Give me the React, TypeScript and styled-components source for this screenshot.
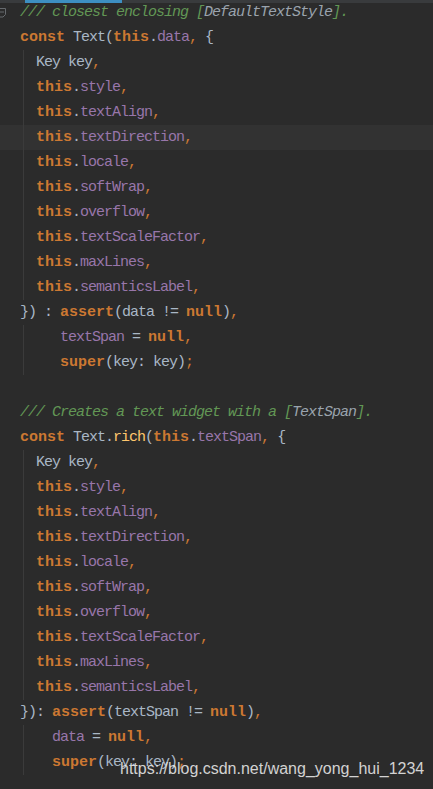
import React from 'react';
import styled, { createGlobalStyle } from 'styled-components';

const Global = createGlobalStyle`
  html, body { margin: 0; padding: 0; background: #2b2b2b; }
  body { overflow: hidden; }
`;

const Editor = styled.div`
  position: relative;
  width: 433px;
  height: 789px;
  overflow: hidden;
  background: #2b2b2b;
  font-family: "Liberation Mono", "DejaVu Sans Mono", monospace;
  font-size: 15px;
  letter-spacing: -1px;
  color: #a9b7c6;
`;

const TabStrip = styled.div`
  position: absolute;
  top: 0;
  left: 0;
  right: 0;
  height: 3px;
  display: flex;
  background: #393b3d;
`;

const ActiveTab = styled.div`
  margin-left: 25px;
  width: 97px;
  height: 3px;
  background: #3d8fc2;
`;

const Line = styled.div<{ $current?: boolean; $guide?: boolean }>`
  display: flex;
  height: 25px;
  line-height: 25px;
  white-space: pre;
  background-color: ${(p) => (p.$current ? '#323232' : 'transparent')};
  background-image: ${(p) => (p.$guide ? 'linear-gradient(#3b3b3b, #3b3b3b)' : 'none')};
  background-size: 1px 100%;
  background-position: 23px 0;
  background-repeat: no-repeat;
`;

const Gutter = styled.div`
  width: 20px;
  flex: none;
  display: flex;
  align-items: center;
`;

const Text = styled.span``;

const Kw = styled.span`
  color: #cc7832;
  font-weight: bold;
  letter-spacing: 0;
`;

const Field = styled.span`
  color: #9876aa;
`;

const Punc = styled.span`
  color: #cc7832;
`;

const Fn = styled.span`
  color: #ffc66d;
`;

const Doc = styled.span`
  color: #629755;
  font-style: italic;
`;

const DocRef = styled.span`
  color: #9aa3ad;
  font-style: italic;
`;

const Watermark = styled.div`
  position: absolute;
  left: 120px;
  top: 761px;
  font-family: "Liberation Sans", Arial, sans-serif;
  font-size: 16px;
  line-height: 16px;
  letter-spacing: 0;
  color: rgba(236, 236, 236, 0.88);
  white-space: nowrap;
`;

type Tok = [string, string];

const render = (toks: Tok[]) =>
  toks.map(([t, s], i) => {
    switch (t) {
      case 'k':
        return <Kw key={i}>{s}</Kw>;
      case 'f':
        return <Field key={i}>{s}</Field>;
      case 'p':
        return <Punc key={i}>{s}</Punc>;
      case 'm':
        return <Fn key={i}>{s}</Fn>;
      case 'c':
        return <Doc key={i}>{s}</Doc>;
      case 'r':
        return <DocRef key={i}>{s}</DocRef>;
      default:
        return <Text key={i}>{s}</Text>;
    }
  });

const FoldMark = () => (
  <svg width="8" height="11" viewBox="0 0 8 11">
    <path d="M-2 1.5H5.5V7.5L3 10L-2 10Z" fill="none" stroke="#666a6e" strokeWidth="1" />
    <path d="M0 5H4" stroke="#666a6e" strokeWidth="1" />
  </svg>
);

const params = (): { toks: Tok[]; current?: boolean }[] => [
  { toks: [['t', '  Key key'], ['p', ',']] },
  { toks: [['t', '  '], ['k', 'this'], ['t', '.'], ['f', 'style'], ['p', ',']] },
  { toks: [['t', '  '], ['k', 'this'], ['t', '.'], ['f', 'textAlign'], ['p', ',']] },
  { toks: [['t', '  '], ['k', 'this'], ['t', '.'], ['f', 'textDirection'], ['p', ',']] },
  { toks: [['t', '  '], ['k', 'this'], ['t', '.'], ['f', 'locale'], ['p', ',']] },
  { toks: [['t', '  '], ['k', 'this'], ['t', '.'], ['f', 'softWrap'], ['p', ',']] },
  { toks: [['t', '  '], ['k', 'this'], ['t', '.'], ['f', 'overflow'], ['p', ',']] },
  { toks: [['t', '  '], ['k', 'this'], ['t', '.'], ['f', 'textScaleFactor'], ['p', ',']] },
  { toks: [['t', '  '], ['k', 'this'], ['t', '.'], ['f', 'maxLines'], ['p', ',']] },
  { toks: [['t', '  '], ['k', 'this'], ['t', '.'], ['f', 'semanticsLabel'], ['p', ',']] },
];

type LineDef = { toks: Tok[]; guide?: boolean; current?: boolean; fold?: boolean };

const firstParams = params().map((l, i) => ({ ...l, guide: true, current: i === 3 }));
const secondParams = params().map((l) => ({ ...l, guide: true }));

const lines: LineDef[] = [
  {
    fold: true,
    toks: [
      ['c', '/// closest enclosing '],
      ['c', '['],
      ['r', 'DefaultTextStyle'],
      ['c', '].'],
    ],
  },
  {
    toks: [
      ['k', 'const'],
      ['t', ' Text('],
      ['k', 'this'],
      ['t', '.'],
      ['f', 'data'],
      ['p', ','],
      ['t', ' {'],
    ],
  },
  ...firstParams,
  {
    toks: [
      ['t', '}) : '],
      ['k', 'assert'],
      ['t', '(data != '],
      ['k', 'null'],
      ['t', ')'],
      ['p', ','],
    ],
  },
  { guide: true, toks: [['t', '     '], ['f', 'textSpan'], ['t', ' = '], ['k', 'null'], ['p', ',']] },
  { guide: true, toks: [['t', '     '], ['k', 'super'], ['t', '(key: key)'], ['p', ';']] },
  { toks: [] },
  {
    toks: [
      ['c', '/// Creates a text widget with a '],
      ['c', '['],
      ['r', 'TextSpan'],
      ['c', '].'],
    ],
  },
  {
    toks: [
      ['k', 'const'],
      ['t', ' Text.'],
      ['m', 'rich'],
      ['t', '('],
      ['k', 'this'],
      ['t', '.'],
      ['f', 'textSpan'],
      ['p', ','],
      ['t', ' {'],
    ],
  },
  ...secondParams,
  {
    toks: [
      ['t', '}): '],
      ['k', 'assert'],
      ['t', '(textSpan != '],
      ['k', 'null'],
      ['t', ')'],
      ['p', ','],
    ],
  },
  { guide: true, toks: [['t', '    '], ['f', 'data'], ['t', ' = '], ['k', 'null'], ['p', ',']] },
  { guide: true, toks: [['t', '    '], ['k', 'super'], ['t', '(key: key)'], ['p', ';']] },
  { toks: [] },
];

export default function App() {
  return (
    <>
      <Global />
      <Editor>
        {lines.map((l, i) => (
          <Line key={i} $guide={l.guide} $current={l.current}>
            <Gutter>{l.fold ? <FoldMark /> : null}</Gutter>
            <span>{render(l.toks)}</span>
          </Line>
        ))}
        <TabStrip>
          <ActiveTab />
        </TabStrip>
        <Watermark>https://blog.csdn.net/wang_yong_hui_1234</Watermark>
      </Editor>
    </>
  );
}
